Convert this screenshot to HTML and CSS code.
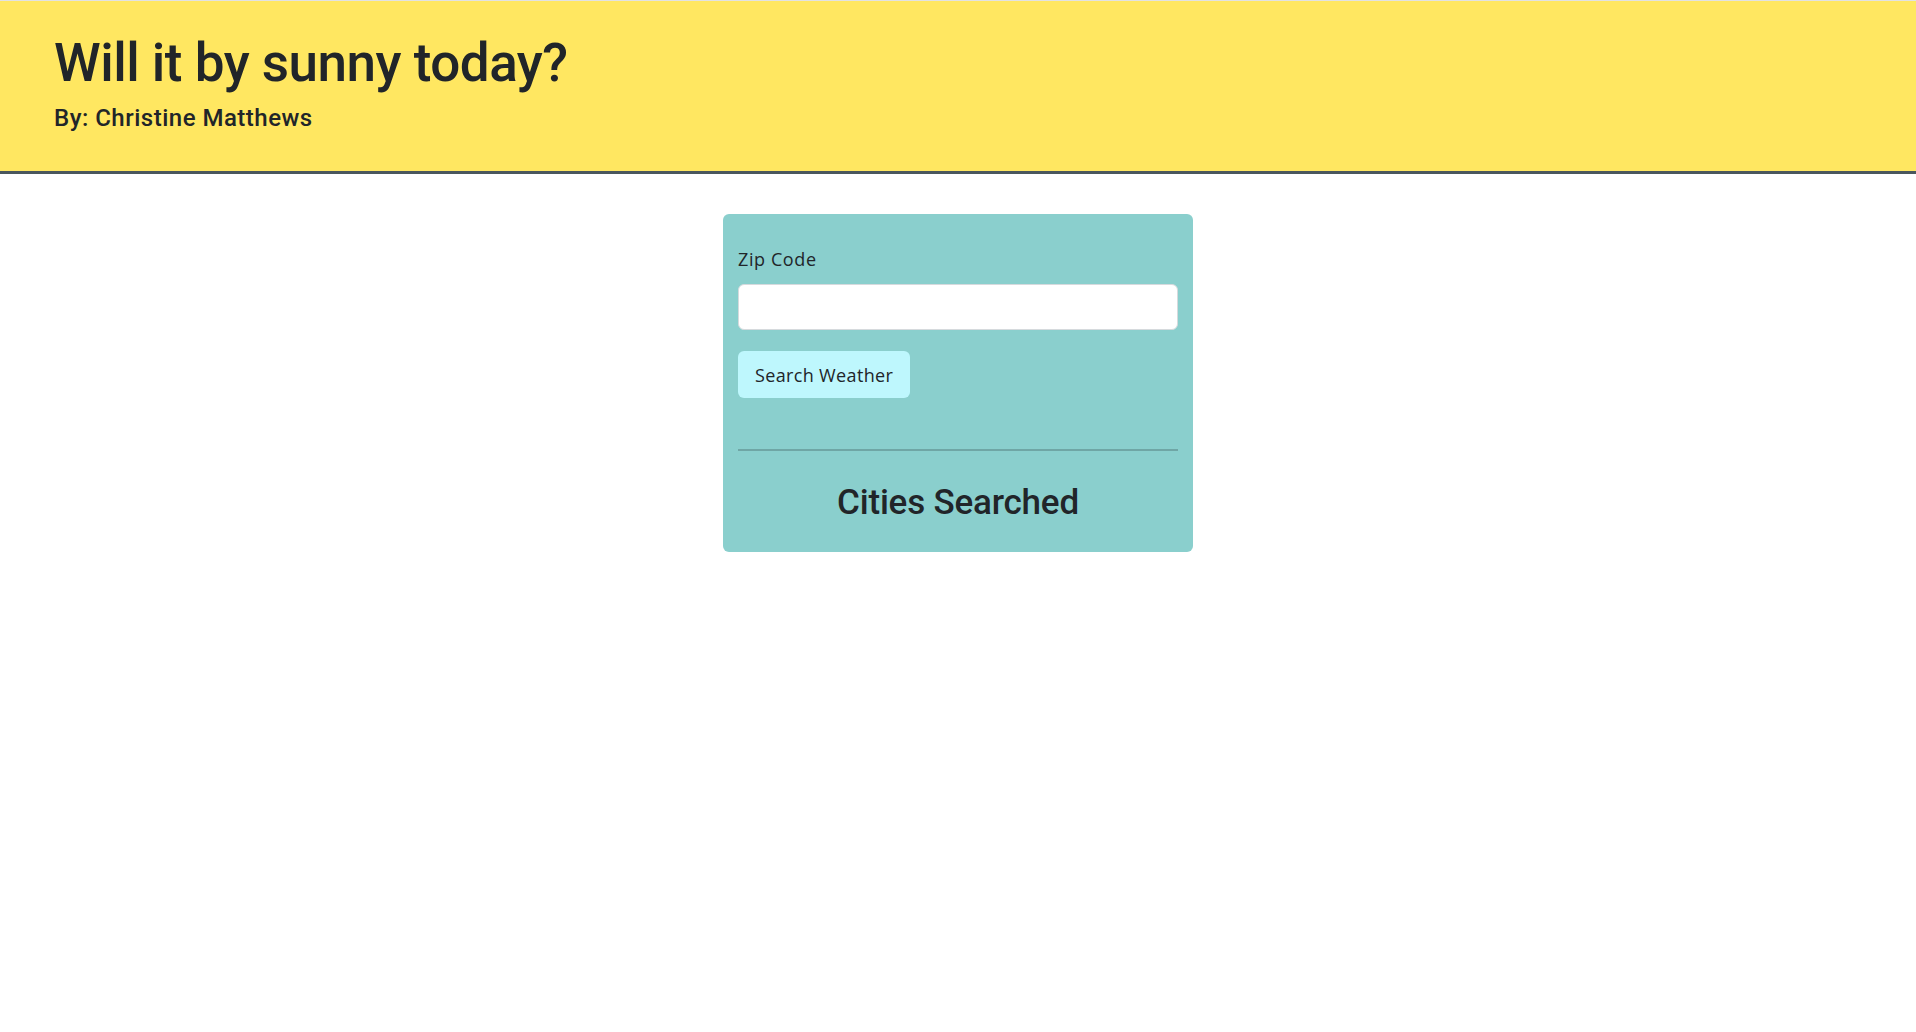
FILE: index.html
```html
<!DOCTYPE html>
<html lang="en">
<head>
<meta charset="utf-8">
<title>Will it by sunny today?</title>
<link rel="stylesheet" href="styles.css">
</head>
<body>
<header class="hero">
  <h1 class="title">Will it by sunny today?</h1>
  <p class="byline">By: Christine Matthews</p>
</header>
<main class="main">
  <section class="card">
    <form class="search-form">
      <label class="label" for="zip">Zip Code</label>
      <input class="input" id="zip" type="text">
      <button class="btn" type="button">Search Weather</button>
    </form>
    <hr class="rule">
    <h2 class="cities">Cities Searched</h2>
  </section>
</main>
</body>
</html>
```

FILE: styles.css
```css
html, body {
  margin: 0;
  padding: 0;
}
body {
  font-family: "Open Sans", "Noto Sans", sans-serif;
  color: #212529;
  background: #ffffff;
  border-top: 1px solid #e2e2e2;
}
.hero {
  background: #ffe761;
  border-bottom: 3px solid #4a575d;
  padding: 31px 54px 35px;
}
.title {
  margin: 0;
  font-family: Roboto, "Open Sans", sans-serif;
  font-size: 53px;
  font-weight: 500;
  line-height: 1.2;
  letter-spacing: -0.5px;
}
.byline {
  margin: 4px 0 0;
  font-family: Roboto, "Open Sans", sans-serif;
  font-size: 24px;
  line-height: 1.5;
  font-weight: 500;
  letter-spacing: 0.5px;
}
.main {
  display: flex;
  justify-content: center;
  padding-top: 40px;
}
.card {
  width: 470px;
  box-sizing: border-box;
  background: #8acfcd;
  border-radius: 6px;
  padding: 32px 15px 28px;
}
.search-form {
  display: flex;
  flex-direction: column;
  align-items: flex-start;
}
.label {
  display: block;
  font-size: 18px;
  line-height: 27px;
  margin-bottom: 11px;
  letter-spacing: 0.6px;
}
.input {
  width: 100%;
  height: 46px;
  box-sizing: border-box;
  border: 1px solid #d6dadd;
  border-radius: 6px;
  background: #fff;
  font: inherit;
  font-size: 18px;
  padding: 0 12px;
  margin: 0;
}
.btn {
  margin-top: 21px;
  height: 47px;
  box-sizing: border-box;
  background: #bef7fd;
  border: none;
  border-radius: 6px;
  font-family: inherit;
  font-size: 18px;
  line-height: 27px;
  color: #212529;
  padding: 11px 17px 9px;
  letter-spacing: 0.35px;
}
.rule {
  margin: 51px 0 0;
  border: none;
  border-top: 2px solid #6fa6a5;
  height: 0;
}
.cities {
  margin: 31px 0 0;
  font-family: Roboto, "Open Sans", sans-serif;
  text-align: center;
  font-size: 35px;
  line-height: 1.2;
  font-weight: 500;
  letter-spacing: -0.2px;
}
```
